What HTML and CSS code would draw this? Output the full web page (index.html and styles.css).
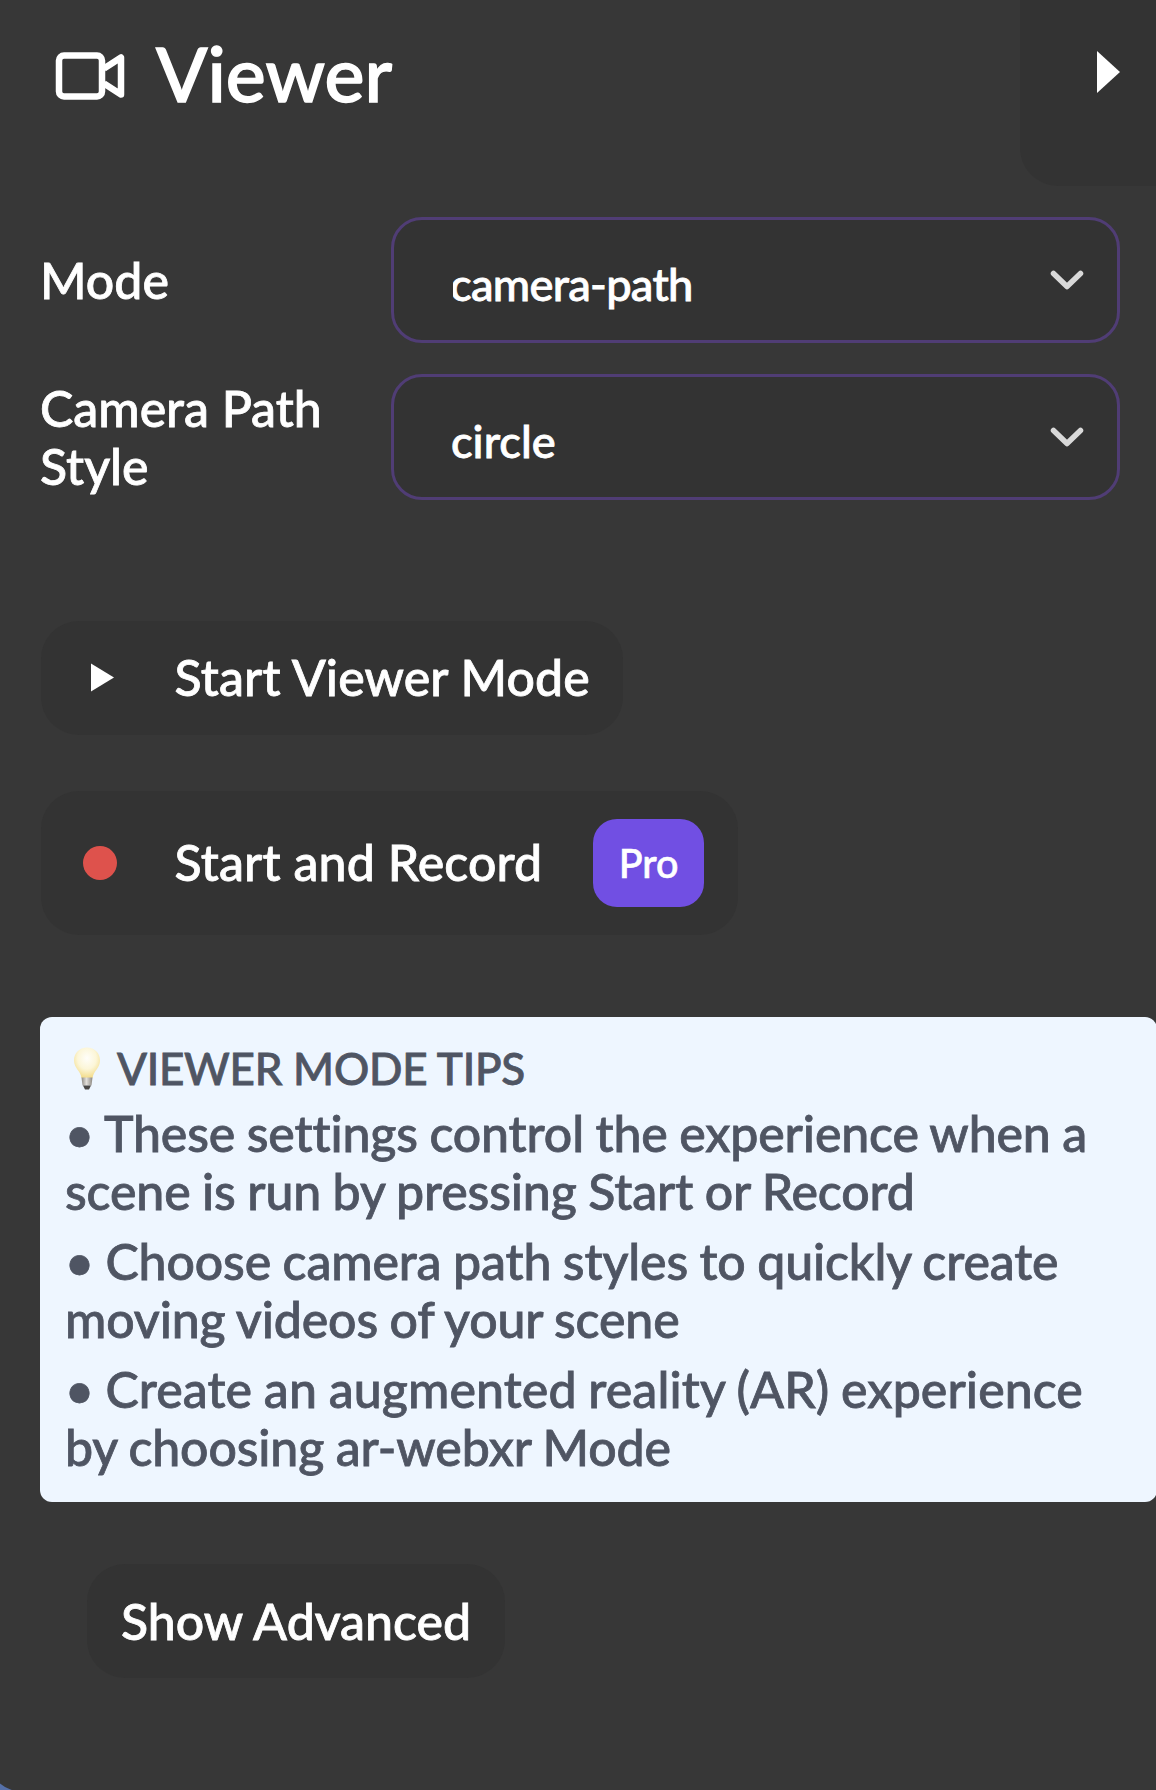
FILE: index.html
```html
<!DOCTYPE html>
<html lang="en">
<head>
<meta charset="utf-8">
<title>Viewer</title>
<link rel="stylesheet" href="styles.css">
</head>
<body>
<main class="panel">
  <header class="header">
    <svg class="header-icon" width="70" height="50" viewBox="0 0 70 50" fill="none" stroke="#fff" stroke-width="6.500" stroke-linejoin="round"><rect x="4" y="4.500" width="43" height="41" rx="5"/><path d="M49 17.500 66 6.500V43.500L49 32.500"/></svg>
    <h1 class="title">Viewer</h1>
    <button class="collapse" aria-label="Collapse"><svg width="23" height="42" viewBox="0 0 23 42"><path d="M0 0 23 21 0 42Z" fill="#fff"/></svg></button>
  </header>

  <section class="fields">
    <div class="field">
      <span class="label">Mode</span>
      <div class="select"><span class="value clipped">camera-path</span><svg width="34" height="22" viewBox="0 0 34 22"><path d="M3.500 4.500 17 17.500 30.500 4.500" fill="none" stroke="#d9d9d9" stroke-width="5.500" stroke-linecap="round" stroke-linejoin="round"/></svg></div>
    </div>
    <div class="field">
      <span class="label">Camera Path Style</span>
      <div class="select"><span class="value">circle</span><svg width="34" height="22" viewBox="0 0 34 22"><path d="M3.500 4.500 17 17.500 30.500 4.500" fill="none" stroke="#d9d9d9" stroke-width="5.500" stroke-linecap="round" stroke-linejoin="round"/></svg></div>
    </div>
  </section>

  <section class="actions">
    <button class="button start"><svg class="glyph" width="34" height="34" viewBox="0 0 34 34"><path d="M8 2.500 31 16.500 8 30.500Z" fill="#fff"/></svg><span class="caption">Start Viewer Mode</span></button>
    <button class="button record"><svg class="glyph" width="34" height="34" viewBox="0 0 34 34"><circle cx="17" cy="17" r="17" fill="#de524c"/></svg><span class="caption">Start and Record</span><span class="pro">Pro</span></button>
  </section>

  <section class="tips">
    <h2 class="tips-title"><svg class="bulb" width="28" height="43" viewBox="0 0 28 43">
      <defs>
        <radialGradient id="glass" cx=".5" cy=".35" r=".65"><stop offset="0" stop-color="#fffefa"/><stop offset=".55" stop-color="#fcf6d8"/><stop offset="1" stop-color="#f3dc8a"/></radialGradient>
        <linearGradient id="base"><stop offset="0" stop-color="#8f8b84"/><stop offset=".45" stop-color="#e2dfda"/><stop offset="1" stop-color="#8c8881"/></linearGradient>
      </defs>
      <path d="M14 .5C6.500.5 1 6 1 13.500 1 21 7.500 24 8.500 31H19.500C20.500 24 27 21 27 13.500 27 6 21.500.5 14 .5Z" fill="url(#glass)"/>
      <path d="M8.500 30.500H19.500L18.500 38.500 9.500 38.500Z" fill="url(#base)"/>
      <path d="M10 38.500H18L16 42.500H12Z" fill="#4a4846"/>
    </svg>VIEWER MODE TIPS</h2>
    <p class="tip">• These settings control the experience when a scene is run by pressing Start or Record</p>
    <p class="tip">• Choose camera path styles to quickly create moving videos of your scene</p>
    <p class="tip">• <span class="loose">Create an augmented reality (AR) experience</span> by choosing ar-webxr Mode</p>
  </section>

  <button class="button advanced">Show Advanced</button>
</main>
</body>
</html>
```
FILE: styles.css
```css
* { box-sizing: border-box; }

body {
  margin: 0;
  height: 1790px;
  overflow: hidden;
  background: #5570a8;
  color: #fff;
  font: 500 50px/58px Lato, sans-serif;
  font-variant-ligatures: none;
  -webkit-text-stroke: 0.8px currentColor;
}

.panel {
  height: 1792px;
  margin-left: -14px;
  padding-left: 14px;
  background: #373737;
  border-bottom-left-radius: 38px;
}

button { border: 0; margin: 0; color: inherit; font: inherit; }

.header {
  display: flex;
  height: 217px;
  padding-left: 55px;
}

.header-icon { margin-top: 51px; }

.title {
  flex: 1;
  margin: 27px 0 0 31px;
  font-size: 75.5px;
  font-weight: 500;
  line-height: 92px;
  -webkit-text-stroke-width: 1.4px;
}

.collapse {
  display: flex;
  width: 136px;
  height: 186px;
  padding: 51px 0 0 77px;
  background: #333;
  border-bottom-left-radius: 38px;
}

.fields {
  display: flex;
  flex-direction: column;
  gap: 31px;
}

.field {
  display: flex;
  align-items: center;
  height: 126px;
  padding-left: 40px;
}

.label { width: 351px; padding-right: 20px; }

.select {
  display: flex;
  align-items: center;
  justify-content: space-between;
  width: 729px;
  height: 126px;
  padding: 0 33px 0 57px;
  border: 3px solid #503d75;
  border-radius: 31px;
  background: #333;
  font-size: 45.2px;
}

.value { padding-top: 7px; }

.clipped {
  margin-left: -1px;
  clip-path: inset(0 0 0 3px);
  letter-spacing: -0.7px;
}

.actions {
  display: flex;
  flex-direction: column;
  align-items: flex-start;
  gap: 56px;
  padding: 121px 0 0 41px;
}

.button {
  display: flex;
  align-items: center;
  border-radius: 38px;
  background: #333;
  white-space: nowrap;
}

.start { width: 582px; height: 114px; padding: 0 0 0 42px; }
.record { width: 697px; height: 144px; padding: 0 0 0 42px; }
.glyph { margin-right: 57.5px; }
.caption { padding-bottom: 2px; letter-spacing: 0.13px; }

.pro {
  width: 111px;
  height: 88px;
  margin-left: auto;
  margin-right: 34px;
  border-radius: 24px;
  background: #714fe3;
  font-size: 39.5px;
  line-height: 88px;
  text-align: center;
  -webkit-text-stroke-width: 0.6px;
}

.tips {
  width: 1117px;
  height: 485px;
  margin: 82px 0 0 40px;
  padding: 22px 24px 0 25px;
  border-radius: 12px;
  background: #eef6ff;
  color: #4f5563;
}

.tips-title {
  display: flex;
  align-items: center;
  height: 58px;
  margin: 0 0 7px;
  padding-left: 8px;
  font-size: 44px;
  font-weight: 500;
  letter-spacing: -0.25px;
}

.bulb { margin-right: 16px; }

.tip {
  margin: 0 0 12px;
  letter-spacing: -0.12px;
  word-spacing: -1px;
}

.loose { letter-spacing: 0.1px; }

.advanced {
  justify-content: center;
  width: 418px;
  height: 114px;
  margin: 62px 0 0 87px;
  padding: 0;
}
```
